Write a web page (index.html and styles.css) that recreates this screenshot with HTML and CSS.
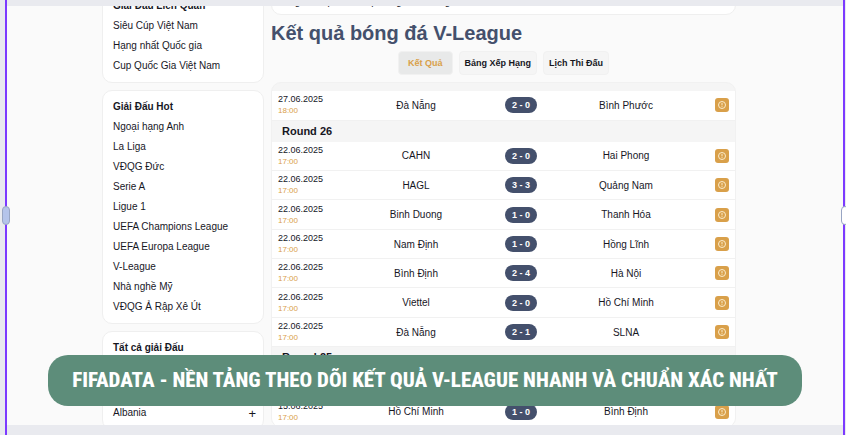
FILE: index.html
```html
<!DOCTYPE html>
<html lang="vi">

<head>
    <meta charset="UTF-8">
    <meta name="viewport" content="width=device-width, initial-scale=1.0">
    <title>Kết quả bóng đá V-League</title>
    <link rel="stylesheet" href="styles.css">
</head>

<body>
    <svg width="0" height="0" class="defs">
        <symbol id="info" viewBox="0 0 14 14">
            <rect width="14" height="14" rx="3" fill="#d9a04a" />
            <circle cx="7" cy="7" r="3.5" fill="none" stroke="#fbeccb" stroke-width="1" />
            <path d="M7 5v2.4M7 8.2v.9" stroke="#fbeccb" stroke-width="1" />
        </symbol>
    </svg>

    <div class="frame">
        <div class="page">
            <aside class="sidebar">
                <section class="card">
                    <h2>Giải Đấu Liên Quan</h2>
                    <ul>
                        <li><a href="#">Siêu Cúp Việt Nam</a></li>
                        <li><a href="#">Hạng nhất Quốc gia</a></li>
                        <li><a href="#">Cup Quốc Gia Việt Nam</a></li>
                    </ul>
                </section>
                <section class="card">
                    <h2>Giải Đấu Hot</h2>
                    <ul>
                        <li><a href="#">Ngoại hạng Anh</a></li>
                        <li><a href="#">La Liga</a></li>
                        <li><a href="#">VĐQG Đức</a></li>
                        <li><a href="#">Serie A</a></li>
                        <li><a href="#">Ligue 1</a></li>
                        <li><a href="#">UEFA Champions League</a></li>
                        <li><a href="#">UEFA Europa League</a></li>
                        <li><a href="#">V-League</a></li>
                        <li><a href="#">Nhà nghề Mỹ</a></li>
                        <li><a href="#">VĐQG Ả Rập Xê Út</a></li>
                    </ul>
                </section>
                <section class="card">
                    <h2>Tất cả giải Đấu</h2>
                    <ul class="countries">
                        <li><a href="#">Albania</a><button type="button" class="expand">+</button></li>
                    </ul>
                </section>
            </aside>

            <main class="main">
                <div class="intro">Bóng đá Việt Nam cúp bóng đá V-League</div>
                <h1>Kết quả bóng đá V-League</h1>
                <nav class="tabs">
                    <button type="button" class="tab active">Kết Quả</button>
                    <button type="button" class="tab">Bảng Xếp Hạng</button>
                    <button type="button" class="tab">Lịch Thi Đấu</button>
                </nav>

                <div class="results">
                    <table>
                        <tr><td class="date">27.06.2025<span>18:00</span></td><td>Đà Nẵng</td><td class="score"><b>2 - 0</b></td><td>Bình Phước</td><td class="more"><svg><use href="#info" /></svg></td></tr>
                    </table>
                    <h3>Round 26</h3>
                    <table>
                        <tr><td class="date">22.06.2025<span>17:00</span></td><td>CAHN</td><td class="score"><b>2 - 0</b></td><td>Hai Phong</td><td class="more"><svg><use href="#info" /></svg></td></tr>
                        <tr><td class="date">22.06.2025<span>17:00</span></td><td>HAGL</td><td class="score"><b>3 - 3</b></td><td>Quảng Nam</td><td class="more"><svg><use href="#info" /></svg></td></tr>
                        <tr><td class="date">22.06.2025<span>17:00</span></td><td>Binh Duong</td><td class="score"><b>1 - 0</b></td><td>Thanh Hóa</td><td class="more"><svg><use href="#info" /></svg></td></tr>
                        <tr><td class="date">22.06.2025<span>17:00</span></td><td>Nam Định</td><td class="score"><b>1 - 0</b></td><td>Hồng Lĩnh</td><td class="more"><svg><use href="#info" /></svg></td></tr>
                        <tr><td class="date">22.06.2025<span>17:00</span></td><td>Bình Định</td><td class="score"><b>2 - 4</b></td><td>Hà Nội</td><td class="more"><svg><use href="#info" /></svg></td></tr>
                        <tr><td class="date">22.06.2025<span>17:00</span></td><td>Viettel</td><td class="score"><b>2 - 0</b></td><td>Hồ Chí Minh</td><td class="more"><svg><use href="#info" /></svg></td></tr>
                        <tr><td class="date">22.06.2025<span>17:00</span></td><td>Đà Nẵng</td><td class="score"><b>2 - 1</b></td><td>SLNA</td><td class="more"><svg><use href="#info" /></svg></td></tr>
                    </table>
                    <h3>Round 25</h3>
                    <table>
                        <tr><td class="date"></td><td></td><td class="score"></td><td></td><td class="more"></td></tr>
                        <tr><td class="date">15.06.2025<span>17:00</span></td><td>Hồ Chí Minh</td><td class="score"><b>1 - 0</b></td><td>Bình Định</td><td class="more"><svg><use href="#info" /></svg></td></tr>
                    </table>
                </div>
            </main>
        </div>
    </div>

    <span class="handle left"></span>
    <span class="handle right"></span>
    <div class="banner">FIFADATA - NỀN TẢNG THEO DÕI KẾT QUẢ V-LEAGUE NHANH VÀ CHUẨN XÁC NHẤT</div>
</body>

</html>
```
FILE: styles.css
```css
* {
    box-sizing: border-box;
}

body {
    margin: 0;
    height: 100vh;
    padding: 0 1px 0 5px;
    background: #e9eaef;
    color: #17171f;
    font-family: "Liberation Sans", Arial, sans-serif;
    font-size: 10px;
    position: relative;
    overflow: hidden;
}

h1, h2, h3, ul {
    margin: 0;
    padding: 0;
}

button {
    font-family: inherit;
}

.defs {
    position: absolute;
}

.frame {
    height: 100%;
    padding: 6px 0 10px;
    border: solid #7c3aff;
    border-width: 0 2px;
}

.page {
    height: 100%;
    padding: 0 107px 0 95px;
    background: #fafafa;
    display: flex;
    align-items: flex-start;
    gap: 7px;
    overflow: hidden;
}

/* the column tops are scrolled out of view */
.sidebar {
    width: 162px;
    margin-top: -17px;
    display: flex;
    flex-direction: column;
    gap: 7px;
}

.card {
    padding: 5px 10px 6px;
    background: #fff;
    border: 1px solid #efefef;
    border-radius: 10px;
}

.card h2 {
    font-size: 10px;
    line-height: 21px;
}

.card li {
    display: flex;
    justify-content: space-between;
    line-height: 20px;
}

.card a {
    color: inherit;
    text-decoration: none;
}

.countries {
    padding-top: 45px;
}

.expand {
    padding: 0;
    border: 0;
    background: none;
    color: inherit;
    font-size: 13px;
    margin-right: -3px;
}

.main {
    flex: 1;
    margin-top: -17px;
}

.intro {
    padding: 5px;
    background: #fff;
    border: 1px solid #efefef;
    border-radius: 10px;
    line-height: 14px;
}

.main h1 {
    color: #44506c;
    font-size: 20px;
    line-height: 36px;
}

.tabs {
    display: flex;
    justify-content: center;
    gap: 6px;
}

.tab {
    height: 24px;
    padding: 0 5px;
    border: 1px solid #f1f1f1;
    border-radius: 4px;
    background: #f5f5f5;
    color: #17171f;
    font-size: 9px;
    font-weight: bold;
}

.tab.active {
    padding: 0 9px;
    background: #e8e9e9;
    color: #d9a04a;
}

.results {
    margin-top: 7px;
    padding-top: 8px;
    background: #f5f5f5;
    border: 1px solid #f1f1f1;
    border-radius: 10px;
    overflow: hidden;
}

.results h3 {
    padding-left: 10px;
    font-size: 11px;
    line-height: 21px;
}

table {
    width: 100%;
    table-layout: fixed;
    border-collapse: collapse;
    background: #fff;
}

tr {
    height: 29px;
    border-bottom: 1px solid #f1f1f1;
}

tr:nth-child(3n) {
    height: 30px;
}

td {
    padding: 0;
    text-align: center;
}

.date {
    width: 59px;
    padding-left: 6px;
    text-align: left;
    font-size: 9px;
    line-height: 12px;
}

.date span {
    display: block;
    color: #d9a04a;
    font-size: 8px;
}

.score {
    width: 40px;
}

.score b {
    display: block;
    margin: 0 4px;
    border-radius: 8px;
    background: #44506c;
    color: #fff;
    font-size: 9px;
    line-height: 16px;
}

.more {
    width: 24px;
}

.more svg {
    display: block;
    width: 14px;
    height: 14px;
    margin-left: 4px;
}

.handle {
    position: absolute;
    top: 206px;
    width: 8px;
    height: 19px;
    border: 1px solid #98a5c3;
    border-radius: 4px;
    background: #b5c4ea;
}

.handle.left {
    left: 2px;
}

.handle.right {
    right: -3px;
    background: #fff;
}

.banner {
    position: absolute;
    left: 48px;
    right: 44px;
    bottom: 29px;
    border-radius: 20px;
    background: #5d8d7a;
    color: #fff;
    font-family: "Roboto Condensed", Roboto, sans-serif;
    font-size: 21px;
    font-weight: 800;
    line-height: 51px;
    text-align: center;
    white-space: nowrap;
}
```
